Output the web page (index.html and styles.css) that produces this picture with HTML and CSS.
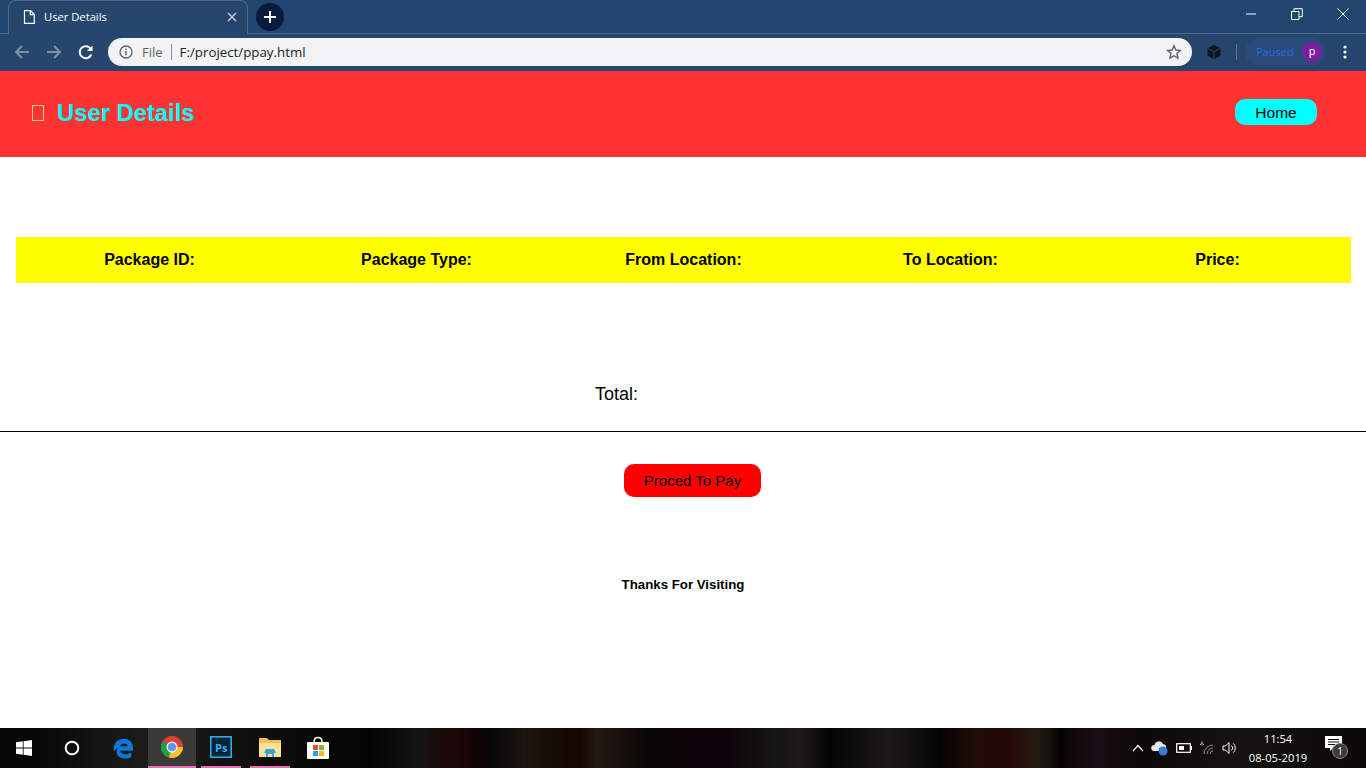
FILE: index.html
```html
<!DOCTYPE html>
<html lang="en">
<head>
  <meta charset="UTF-8">
  <meta name="viewport" content="width=device-width, initial-scale=1.0">
  <title>User Details</title>
  <link rel="stylesheet" href="styles.css">
</head>
<body>

<div class="tabstrip">
  <div class="tab">
    <svg class="tab-icon" width="12" height="14" viewBox="0 0 12 14"><path d="M1.500.7h6l3.800 3.800v8.800h-9.800zM7.300.7v4h4" fill="none" stroke="#fff" stroke-width="1.200"/></svg>
    <span class="tab-title">User Details</span>
    <svg class="tab-close" width="10" height="10" viewBox="0 0 10 10"><path d="M1 1l8 8M9 1l-8 8" stroke="#bcc6d3" stroke-width="1.600"/></svg>
  </div>
  <div class="new-tab">
    <svg width="14" height="14" viewBox="0 0 14 14"><path d="M7 1v12M1 7h12" stroke="#fff" stroke-width="2"/></svg>
  </div>
  <div class="window-btns">
    <svg width="12" height="12" viewBox="0 0 12 12"><path d="M1 6h10" stroke="#fff" stroke-width="1"/></svg>
    <svg width="12" height="12" viewBox="0 0 12 12"><path d="M.5 3.500h7.500v8h-7.500zM3 3.500v-2.800h8.300v8h-3.300" fill="none" stroke="#fff" stroke-width="1"/></svg>
    <svg width="12" height="12" viewBox="0 0 12 12"><path d="M.5.500l11 11M11.500.500l-11 11" stroke="#fff" stroke-width="1"/></svg>
  </div>
</div>

<div class="toolbar">
  <svg class="nav-btn" width="16" height="16" viewBox="0 0 16 16"><path d="M15 8H2M8 2L2 8l6 6" fill="none" stroke="#7e8fa6" stroke-width="2"/></svg>
  <svg class="nav-btn" width="16" height="16" viewBox="0 0 16 16"><path d="M1 8h13M8 2l6 6-6 6" fill="none" stroke="#7e8fa6" stroke-width="2"/></svg>
  <svg class="nav-btn" width="16" height="16" viewBox="0 0 16 16"><path d="M13.300 10.500a6 6 0 1 1-.3-5.300" fill="none" stroke="#fff" stroke-width="2"/><path d="M14.500 1.500v5.500h-5.500z" fill="#fff"/></svg>
  <div class="omnibox">
    <svg width="14" height="14" viewBox="0 0 14 14"><circle cx="7" cy="7" r="6" fill="none" stroke="#5f6368" stroke-width="1.300"/><path d="M7 6v4.300M7 3.500v1.500" stroke="#5f6368" stroke-width="1.500"/></svg>
    <span class="scheme">File</span>
    <span class="url">F:/project/ppay.html</span>
    <svg class="star" width="16" height="16" viewBox="0 0 16 16"><path d="M8 1.800l1.900 4.200 4.500.5-3.400 3 1 4.500-4-2.300-4 2.300 1-4.500-3.400-3 4.500-.5z" fill="none" stroke="#5f6368" stroke-width="1.400"/></svg>
  </div>
  <svg class="ext" width="16" height="16" viewBox="0 0 16 16"><path d="M8 .8l6.500 3.400v7.600L8 15.200l-6.500-3.400V4.200z" fill="#0b1524"/><path d="M1.800 4.400L8 7.600l6.200-3.200M8 7.600v7.400" fill="none" stroke="#3b5472" stroke-width=".8"/></svg>
  <span class="divider"></span>
  <div class="profile">
    <span class="paused">Paused</span>
    <span class="avatar">p</span>
  </div>
  <svg class="menu" width="4" height="14" viewBox="0 0 4 14"><circle cx="2" cy="2" r="1.600" fill="#fff"/><circle cx="2" cy="7" r="1.600" fill="#fff"/><circle cx="2" cy="12" r="1.600" fill="#fff"/></svg>
</div>

<div class="page">
  <header class="site-header">
    <div class="brand">
      <span class="brand-icon"></span>
      <h1>User Details</h1>
    </div>
    <a class="home-btn">Home</a>
  </header>

  <table class="details">
    <tr>
      <th>Package ID:</th>
      <th>Package Type:</th>
      <th>From Location:</th>
      <th>To Location:</th>
      <th>Price:</th>
    </tr>
  </table>

  <p class="total">Total:</p>
  <hr class="rule">
  <div class="pay-row"><button class="pay-btn">Proced To Pay</button></div>
  <p class="thanks">Thanks For Visiting</p>
</div>

<div class="taskbar">
  <svg class="win" width="16" height="16" viewBox="0 0 16 16"><path d="M0 2.300l6.800-1v6.200H0zM7.600 1.200L16 0v7.500H7.600zM0 8.400h6.800v6.300L0 13.700zM7.600 8.400H16V16l-8.400-1.200z" fill="#fff"/></svg>
  <svg class="cortana" width="16" height="16" viewBox="0 0 16 16"><circle cx="8" cy="8" r="6.300" fill="none" stroke="#fff" stroke-width="2"/></svg>
  <div class="task-icons">
    <div class="task-item">
      <svg width="22" height="24" viewBox="0 0 24 24"><path d="M2 13C2 6 7 2 13 2c6 0 10 4 10 11v2H9c.5 4 6.500 5 12 2v5c-7 3-16 1-16-6 0-2 .8-3.500 2-5-1.500 1-3.500 3-5 5zm7-3h8c0-4-7.500-4-8 0z" fill="#0a78d7"/></svg>
    </div>
    <div class="task-item active">
      <svg width="24" height="24" viewBox="0 0 24 24"><circle cx="12" cy="12" r="11" fill="#de4032"/><path d="M12 12L2.300 6.800A11 11 0 0 0 9 22.600z" fill="#1fa149"/><path d="M12 12h10.900A11 11 0 0 1 9 22.600z" fill="#fbc02d"/><circle cx="12" cy="12" r="5.500" fill="#fff"/><circle cx="12" cy="12" r="4.300" fill="#5f94ee"/></svg>
    </div>
    <div class="task-item open">
      <svg width="22" height="22" viewBox="0 0 22 22"><rect x=".8" y=".8" width="20.400" height="20.400" fill="#06233a" stroke="#2fb5ee" stroke-width="1.500"/><text x="5" y="15.500" class="ps">Ps</text></svg>
    </div>
    <div class="task-item open">
      <svg width="24" height="22" viewBox="0 0 24 22"><path d="M1 2h8l2 2h12v17H1z" fill="#f0c050"/><path d="M1 7h22v14H1z" fill="#fbe39a"/><path d="M8 21v-4l-2 0 2-4h8l2 4h-2v4h-2v-3h-4v3z" fill="#35a4dc"/></svg>
    </div>
    <div class="task-item">
      <svg width="24" height="24" viewBox="0 0 24 24"><path d="M8 6c0-6 8-6 8 0" fill="none" stroke="#fff" stroke-width="1.500"/><rect x="1" y="6" width="22" height="17" rx="1" fill="#fff"/><rect x="7" y="9" width="5" height="5" fill="#e8532b"/><rect x="13" y="9" width="5" height="5" fill="#7dba3a"/><rect x="7" y="15" width="5" height="5" fill="#1fa5e8"/><rect x="13" y="15" width="5" height="5" fill="#fbb812"/></svg>
    </div>
  </div>
  <div class="tray">
    <svg width="12" height="8" viewBox="0 0 12 8"><path d="M1 7l5-5.500 5 5.500" fill="none" stroke="#fff" stroke-width="1.200"/></svg>
    <svg width="18" height="16" viewBox="0 0 18 16"><path d="M3 11a3 3 0 0 1 .5-6A4.500 4.500 0 0 1 12 4a3.500 3.500 0 0 1 3 4H8v3z" fill="#e8e8e8"/><circle cx="12" cy="11" r="4.500" fill="#2f7fd6"/></svg>
    <svg width="16" height="10" viewBox="0 0 16 10"><rect x=".7" y=".7" width="13.600" height="8.600" fill="none" stroke="#fff" stroke-width="1.200"/><rect x="3" y="3" width="5" height="4" fill="#fff"/><rect x="15" y="3" width="1" height="4" fill="#fff"/></svg>
    <span class="wifi">
      <svg width="16" height="16" viewBox="0 0 16 16"><path d="M1 5l1.500 1M3 2.500v2.500M5 5L3.500 6" stroke="#fff" stroke-width=".9"/><path d="M5 15a9 9 0 0 1 9-9M8 15a6 6 0 0 1 6-6M11 15a3 3 0 0 1 3-3" fill="none" stroke="#8b8b8b" stroke-width="1"/></svg>
    </span>
    <svg width="16" height="14" viewBox="0 0 16 14"><path d="M1 5h2.500L7 1.500v11L3.500 9H1z" fill="none" stroke="#fff" stroke-width="1"/><path d="M9.500 4.500a3.500 3.500 0 0 1 0 5M11.500 2.500a6.500 6.500 0 0 1 0 9" fill="none" stroke="#fff" stroke-width="1"/></svg>
    <div class="clock">
      <span>11:54</span>
      <span>08-05-2019</span>
    </div>
    <div class="notify">
      <svg width="17" height="15" viewBox="0 0 17 15"><path d="M0 0h17v12H8l-3 3v-3H0z" fill="#fff"/><path d="M3 3.500h11M3 6h11M3 8.500h7" stroke="#111" stroke-width="1"/></svg>
      <span class="notify-count">1</span>
    </div>
  </div>
</div>

</body>
</html>
```

FILE: styles.css
```css
html, body {
  height: 100%;
}
body {
  margin: 0;
  height: 768px;
  overflow: hidden;
  display: flex;
  flex-direction: column;
  font-family: "Liberation Sans", Arial, sans-serif;
  background: #fff;
}

/* browser frame */
.tabstrip {
  height: 34px;
  flex: none;
  display: flex;
  align-items: flex-start;
  padding-left: 8px;
  background: #21456f;
  box-shadow: inset 0 -1px 0 #4d6a8d;
}
.tab {
  width: 240px;
  height: 34px;
  box-sizing: border-box;
  display: flex;
  align-items: center;
  padding: 0 10px 2px 14px;
  background: #26466d;
  border: 1px solid #4d6a8d;
  border-bottom: none;
  border-radius: 8px 8px 0 0;
}
.tab-title {
  flex: 1;
  margin-left: 9px;
  margin-top: -1px;
  font: 11.200px "Open Sans", sans-serif;
  color: #fff;
}
.new-tab {
  width: 28px;
  height: 28px;
  margin: 3px 0 0 8px;
  border-radius: 50%;
  background: #0a1a3a;
  display: flex;
  align-items: center;
  justify-content: center;
}
.window-btns {
  margin-left: auto;
  width: 121px;
  height: 28px;
  display: flex;
  align-items: center;
  gap: 34px;
}
.toolbar {
  height: 37px;
  flex: none;
  box-sizing: border-box;
  display: flex;
  align-items: center;
  padding: 0 0 1px 14px;
  background: #26466d;
}
.nav-btn {
  margin-right: 16px;
}
.nav-btn:nth-child(3) {
  margin-right: 14px;
}
.omnibox {
  width: 1084px;
  height: 28px;
  box-sizing: border-box;
  display: flex;
  align-items: center;
  padding: 0 10px 0 11px;
  border-radius: 14px;
  background: #f1f3f4;
  font: 13px "Open Sans", sans-serif;
}
.scheme {
  margin-left: 9px;
  padding-right: 8px;
  color: #5f6368;
  border-right: 1px solid #8a8d91;
  line-height: 16px;
}
.url {
  flex: 1;
  margin-left: 8px;
  color: #202124;
  font-size: 13.300px;
}
.ext {
  margin-left: 14px;
}
.divider {
  width: 1px;
  height: 16px;
  margin-left: 14px;
  background: #5a7492;
}
.profile {
  width: 81px;
  height: 28px;
  margin-left: 8px;
  box-sizing: border-box;
  display: flex;
  align-items: center;
  justify-content: space-between;
  padding: 0 4px 0 11px;
  border-radius: 14px;
  background: #2a4b78;
}
.paused {
  margin-top: -1px;
  font: 11px "Open Sans", sans-serif;
  color: #1f6ae0;
}
.avatar {
  width: 20px;
  height: 20px;
  border-radius: 50%;
  background: #7b1fa2;
  color: #fff;
  font: 11px/18px "Open Sans", sans-serif;
  text-align: center;
}
.menu {
  margin-left: 17px;
}

/* page content */
.page {
  flex: 1;
  min-height: 0;
}
.site-header {
  height: 86px;
  display: flex;
  align-items: center;
  justify-content: space-between;
  padding: 0 49px 0 32px;
  background: #ff3333;
}
.brand {
  display: flex;
  align-items: center;
  margin-bottom: 2px;
}
.brand-icon {
  width: 10px;
  height: 14px;
  border: 1px solid #e6d070;
}
h1 {
  margin: 0 0 0 13px;
  font-size: 23.800px;
  font-weight: bold;
  color: #00ffff;
}
.home-btn {
  width: 82px;
  height: 26px;
  margin-bottom: 4px;
  line-height: 27px;
  text-align: center;
  font-size: 15.500px;
  color: #000;
  background: #00ffff;
  border-radius: 10px;
}
.details {
  width: 1335px;
  height: 46px;
  margin: 80px 0 0 16px;
  table-layout: fixed;
  border-collapse: collapse;
  background: #ffff00;
}
.details th {
  padding: 0;
  font-size: 16px;
  font-weight: bold;
  color: #000;
}
.total {
  margin: 101px 0 0;
  padding-left: 595px;
  font-size: 18px;
  line-height: 21px;
}
.rule {
  height: 1px;
  margin: 26px 0 0;
  border: none;
  background: #000;
}
.pay-row {
  padding: 32px 0 0 624px;
}
.pay-btn {
  display: block;
  width: 137px;
  height: 33px;
  padding: 0;
  border: none;
  border-radius: 10px;
  background: #ff0000;
  color: #000;
  font: 15px "Liberation Sans", Arial, sans-serif;
}
.thanks {
  margin: 80px 0 0;
  text-align: center;
  font-size: 13.280px;
  font-weight: bold;
}

/* taskbar */
.taskbar {
  height: 40px;
  flex: none;
  display: flex;
  align-items: center;
  background: linear-gradient(90deg, #050505 0, #0a0a08 50px, #141612 100px, #1c1c18 140px, #0a0a08 300px, #040404 370px, #141410 420px, #1c0406 463px, #060606 490px, #1a1610 524px, #160402 580px, #221a10 596px, #0a0608 650px, #0c0208 720px, #161614 777px, #201a18 800px, #040404 830px, #1c1a16 890px, #040404 940px, #200c08 974px, #240806 1010px, #241e12 1037px, #060404 1060px, #1a0e14 1096px, #0c0808 1140px, #161410 1240px, #0a0808 1366px);
}
.win {
  margin-left: 16px;
}
.cortana {
  margin-left: 32px;
}
.task-icons {
  display: flex;
  margin-left: 19px;
  height: 40px;
}
.task-item {
  width: 48px;
  height: 40px;
  box-sizing: border-box;
  display: flex;
  align-items: center;
  justify-content: center;
  margin-right: 1px;
}
.task-item.active {
  background: #3b3a36;
  border-bottom: 2px solid #e36fbb;
  margin-right: 5px;
}
.task-item.open {
  width: 40px;
  border-bottom: 2px solid #e36fbb;
  margin-right: 9px;
}
.task-item.open + .task-item:not(.open) {
  margin-left: -5px;
}
.ps {
  font: bold 11px "Open Sans", sans-serif;
  fill: #2fb5ee;
}
.tray {
  margin-left: auto;
  display: flex;
  align-items: center;
  gap: 7px;
  color: #fff;
}
.wifi {
  display: flex;
  margin-bottom: 3px;
}
.clock {
  display: flex;
  flex-direction: column;
  align-items: center;
  width: 60px;
  margin-left: 3px;
  font: 11.200px/19px "Open Sans", sans-serif;
}
.notify {
  position: relative;
  width: 46px;
  height: 24px;
  margin-left: 5px;
  padding-left: 5px;
  box-sizing: border-box;
}
.notify-count {
  position: absolute;
  left: 12px;
  top: 7px;
  width: 16px;
  height: 16px;
  border-radius: 50%;
  background: #3c3c3c;
  border: 1px solid #888;
  box-sizing: border-box;
  font: 10px/14px "Open Sans", sans-serif;
  text-align: center;
}
```
